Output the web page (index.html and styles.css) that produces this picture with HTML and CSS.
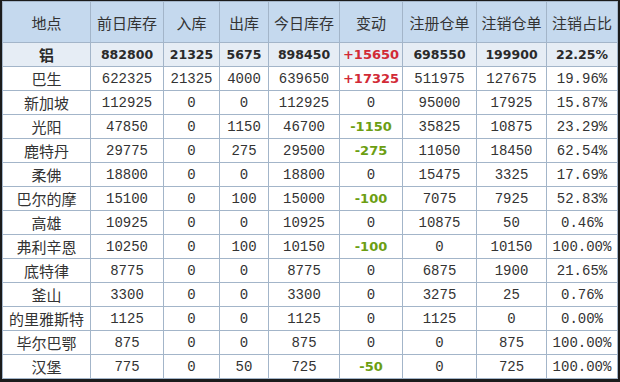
FILE: index.html
```html
<!DOCTYPE html>
<html lang="zh">
<head>
  <meta charset="UTF-8">
  <title>铝库存</title>
  <link rel="stylesheet" href="styles.css">
</head>
<body>
  <table class="stock">
    <colgroup>
      <col class="c-place"><col class="c-prev"><col class="c-in"><col class="c-out"><col class="c-today">
      <col class="c-chg"><col class="c-reg"><col class="c-can"><col class="c-ratio">
    </colgroup>
    <thead>
      <tr>
        <th>地点</th><th>前日库存</th><th>入库</th><th>出库</th><th>今日库存</th>
        <th>变动</th><th>注册仓单</th><th>注销仓单</th><th>注销占比</th>
      </tr>
    </thead>
    <tbody>
      <tr class="total">
        <td class="place">铝</td><td>882800</td><td>21325</td><td>5675</td><td>898450</td>
        <td class="up">+15650</td><td>698550</td><td>199900</td><td>22.25%</td>
      </tr>
      <tr><td class="place">巴生</td><td>622325</td><td>21325</td><td>4000</td><td>639650</td><td class="up">+17325</td><td>511975</td><td>127675</td><td>19.96%</td></tr>
      <tr><td class="place">新加坡</td><td>112925</td><td>0</td><td>0</td><td>112925</td><td>0</td><td>95000</td><td>17925</td><td>15.87%</td></tr>
      <tr><td class="place">光阳</td><td>47850</td><td>0</td><td>1150</td><td>46700</td><td class="down">-1150</td><td>35825</td><td>10875</td><td>23.29%</td></tr>
      <tr><td class="place">鹿特丹</td><td>29775</td><td>0</td><td>275</td><td>29500</td><td class="down">-275</td><td>11050</td><td>18450</td><td>62.54%</td></tr>
      <tr><td class="place">柔佛</td><td>18800</td><td>0</td><td>0</td><td>18800</td><td>0</td><td>15475</td><td>3325</td><td>17.69%</td></tr>
      <tr><td class="place">巴尔的摩</td><td>15100</td><td>0</td><td>100</td><td>15000</td><td class="down">-100</td><td>7075</td><td>7925</td><td>52.83%</td></tr>
      <tr><td class="place">高雄</td><td>10925</td><td>0</td><td>0</td><td>10925</td><td>0</td><td>10875</td><td>50</td><td>0.46%</td></tr>
      <tr><td class="place">弗利辛恩</td><td>10250</td><td>0</td><td>100</td><td>10150</td><td class="down">-100</td><td>0</td><td>10150</td><td>100.00%</td></tr>
      <tr><td class="place">底特律</td><td>8775</td><td>0</td><td>0</td><td>8775</td><td>0</td><td>6875</td><td>1900</td><td>21.65%</td></tr>
      <tr><td class="place">釜山</td><td>3300</td><td>0</td><td>0</td><td>3300</td><td>0</td><td>3275</td><td>25</td><td>0.76%</td></tr>
      <tr><td class="place">的里雅斯特</td><td>1125</td><td>0</td><td>0</td><td>1125</td><td>0</td><td>1125</td><td>0</td><td>0.00%</td></tr>
      <tr><td class="place">毕尔巴鄂</td><td>875</td><td>0</td><td>0</td><td>875</td><td>0</td><td>0</td><td>875</td><td>100.00%</td></tr>
      <tr><td class="place">汉堡</td><td>775</td><td>0</td><td>50</td><td>725</td><td class="down">-50</td><td>0</td><td>725</td><td>100.00%</td></tr>
    </tbody>
  </table>
</body>
</html>
```

FILE: styles.css
```css
html, body {
  margin: 0;
  background-color: #1b1b1b;
}
body {
  width: 620px;
  height: 382px;
  padding: 1px 0 0 2px;
  box-sizing: border-box;
  overflow: hidden;
}
.stock {
  border-collapse: collapse;
  table-layout: fixed;
  width: 615px;
  background-color: #fff;
  color: #333;
}
.c-place { width: 88px; }
.c-prev { width: 73px; }
.c-in { width: 56px; }
.c-out { width: 49px; }
.c-today { width: 71px; }
.c-chg { width: 63px; }
.c-reg { width: 74px; }
.c-can { width: 70px; }
.c-ratio { width: 71px; }
th, td {
  border: 1px solid #a3b5c9;
  padding: 0;
  text-align: center;
  white-space: nowrap;
}
th {
  height: 40px;
  background-color: #c5d9ee;
  font-family: "Noto Sans CJK SC", sans-serif;
  font-weight: normal;
  font-size: 15px;
  color: #333;
}
td {
  height: 23px;
  font-family: "Liberation Mono", "Noto Sans CJK SC", monospace;
  font-size: 14px;
  color: #333;
}
td.place {
  font-family: "Noto Sans CJK SC", sans-serif;
  font-size: 15px;
}
.total td {
  background-color: #e6edf5;
  font-family: "DejaVu Sans", sans-serif;
  font-weight: bold;
  font-size: 12.5px;
  color: #2a2a2a;
}
.total td.place {
  font-family: "Noto Sans CJK SC", sans-serif;
  font-size: 15px;
}
td.up, td.down {
  font-family: "DejaVu Sans", sans-serif;
  font-weight: bold;
  font-size: 13px;
}
td.up {
  color: #d22a36;
}
td.down {
  color: #6c9e12;
}
```
